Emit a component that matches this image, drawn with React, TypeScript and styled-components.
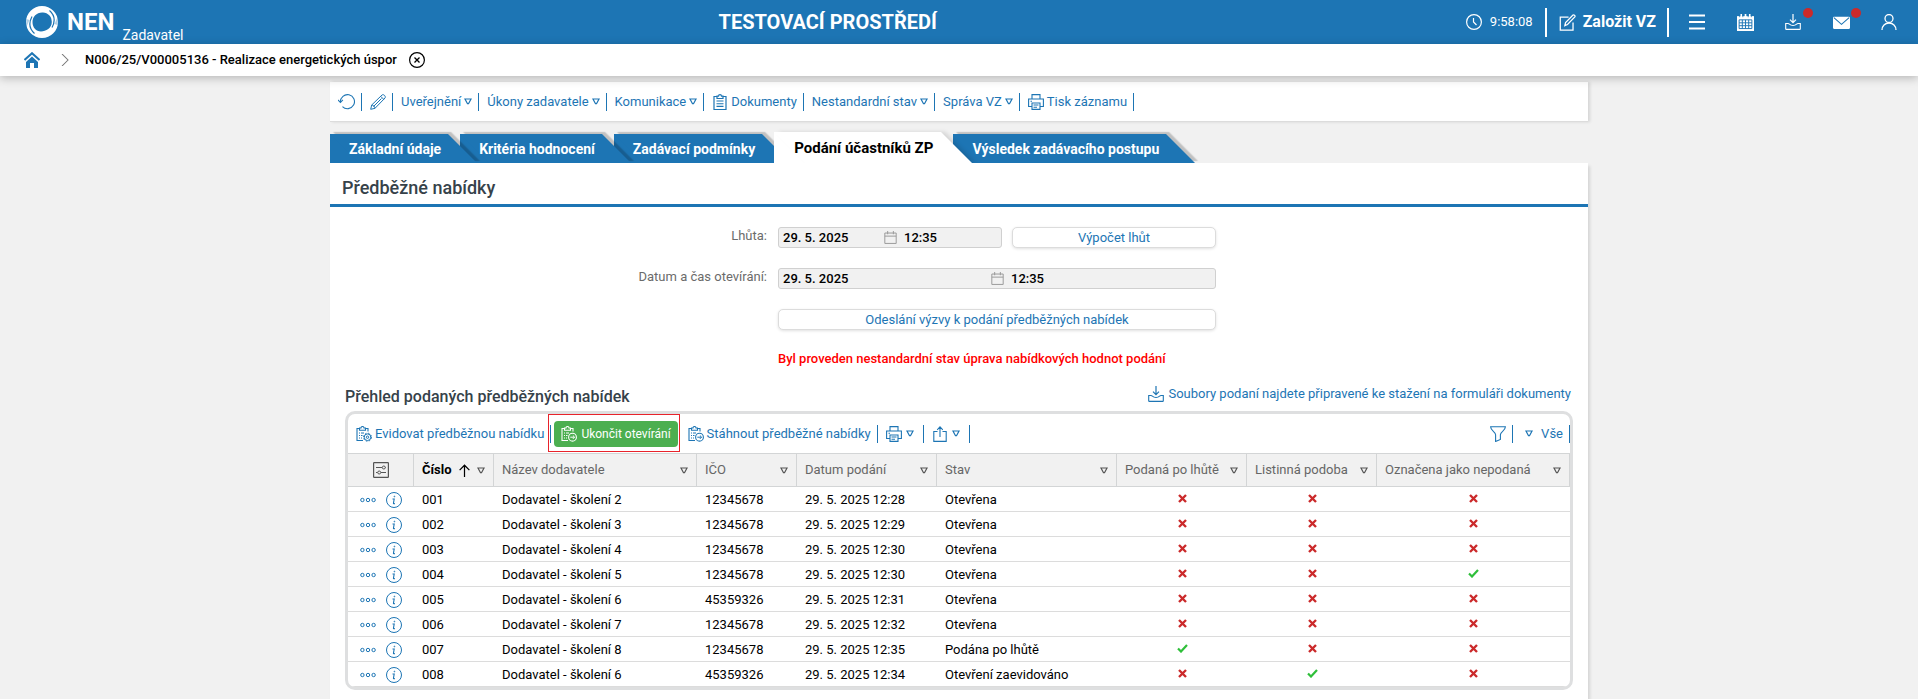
import React from 'react';
import styled, { createGlobalStyle, css } from 'styled-components';

const blue = '#1d75b4';
const line = '#dcdcdc';

const GlobalStyle = createGlobalStyle`
  *, *::before, *::after { box-sizing: border-box; }
  html, body { margin: 0; background: #f1f1f1; }
  body, button, input { font-family: Roboto, "Liberation Sans", sans-serif; font-size: 13px; line-height: 16px; color: #000; }
  button { border: 0; margin: 0; padding: 0; background: none; cursor: pointer; }
  a { color: ${blue}; text-decoration: none; }
  svg { display: block; flex: none; }
`;

/* ---------- icons ---------- */

type IconProps = { size?: number; children?: React.ReactNode };

const Icon = ({ size = 16, children }: IconProps) => (
  <svg width={size} height={size} viewBox="0 0 16 16" fill="none" stroke="currentColor" aria-hidden="true">
    {children}
  </svg>
);

const Clock = () => (
  <Icon><circle cx="8" cy="8" r="7.4" strokeWidth="1.2" /><path d="M7.5 4v4l3 3" strokeWidth="1.2" /></Icon>
);
const Edit = () => (
  <Icon size={17}>
    <path d="M9 3H1.200V15.200H13.200V8" strokeWidth="1.200" />
    <path d="M5.500 11l.7-2.900L13.200 1c.7-.7 2.400.8 1.700 1.700L8 9.900z" strokeWidth="1.200" />
  </Icon>
);
const Menu = () => <Icon><path d="M0 1.500h16M0 8h16M0 14.500h16" strokeWidth="1.800" /></Icon>;
const CalendarSolid = () => (
  <Icon size={17}>
    <path d="M0 2h16v14H0z" fill="currentColor" stroke="none" />
    <path d="M4 0v3.500M8 0v3.500M12 0v3.500" strokeWidth="1.600" />
    <path d="M2 5.500h12M2 8.300h12M2 11h12M2 13.700h12M2 5.500v8.200M5 5.500v8.200M8 5.500v8.200M11 5.500v8.200M14 5.500v8.200" stroke={blue} strokeWidth=".9" />
    <path d="M2.500 0v3M5.500 0v3M10.500 0v3M13.500 0v3" stroke={blue} strokeWidth=".7" />
  </Icon>
);
const Download = () => (
  <Icon>
    <path d="M8 0v8.500M5 5.700l3 3 3-3" strokeWidth="1.200" />
    <path d="M3 9.500H.700V14.700q0 .7.7.7h13.200q.7 0 .7-.7V9.500H13C11.500 9.500 11.500 11.500 8 11.500S4.500 9.500 3 9.500z" strokeWidth="1.100" />
  </Icon>
);
const Mail = () => (
  <Icon size={17}>
    <rect x="0" y="2.500" width="16" height="11.500" rx="1" fill="currentColor" stroke="none" />
    <path d="M.8 3.500L8 9.700l7.200-6.200" stroke={blue} strokeWidth="1" />
  </Icon>
);
const User = () => (
  <Icon><circle cx="8" cy="4.500" r="4" strokeWidth="1.300" /><path d="M1 16c0-4 3-7 7-7s7 3 7 7" strokeWidth="1.300" /></Icon>
);
const Home = () => (
  <Icon>
    <path d="M.5 8L8 1.200 15.500 8" strokeWidth="2" />
    <path d="M8 4.600L2 10v6h4v-5h4v5h4v-6z" fill="currentColor" stroke="none" />
  </Icon>
);
const Chevron = () => <Icon size={12}><path d="M4 0l8 8-8 8" stroke="#777" strokeWidth="1.400" /></Icon>;
const CloseCircle = () => (
  <Icon><circle cx="8" cy="8" r="7.400" strokeWidth="1.200" /><path d="M5.500 5.500l5 5M10.500 5.500l-5 5" strokeWidth="1.300" /></Icon>
);
const Refresh = () => (
  <Icon size={17}><path d="M2.300 8.500A6.600 6.600 0 1 1 4.200 12.800" /><path d="M0 6.500l2.300 2.500 2.300-2.500" /></Icon>
);
const Pencil = () => (
  <Icon>
    <path d="M.7 15.300l1-4.300L12 1c1.500-1.300 4.300 1.500 3 3L5 14.300z" />
    <path d="M1.700 11c1.500 0 3.300 1.800 3.300 3.300M10.700 2.300l3 3M3.500 12.500l8-8" />
  </Icon>
);
const Triangle = () => (
  <svg width="8" height="7" viewBox="0 0 8 7" fill="none" stroke="currentColor" aria-hidden="true">
    <path d="M1 1h6L4.500 5.700h-1z" strokeWidth="1.200" />
  </svg>
);
const Clipboard = () => (
  <Icon>
    <path d="M5 2.500H2v13h12v-13h-3M5 4.500v-2.300h1.500a1.500 1.500 0 0 1 3 0H11v2.300z" strokeWidth="1.200" />
    <path d="M4.500 7h7M4.500 9.700h7M4.500 12.400h7" strokeWidth="1.100" />
  </Icon>
);
const Printer = () => (
  <Icon>
    <path d="M4 5V.6h8V5M4 12.500H.6V5h14.800v7.500H12" strokeWidth="1.100" />
    <path d="M4 9h8v6.400H4zM5.500 11h5M5.500 13.200h3.500M2.500 7.200h1.500" strokeWidth="1.100" />
  </Icon>
);
const ClipboardGear = () => (
  <Icon>
    <path d="M3.500 2.500H1v12h6M9.500 2.500H12v3M3.500 4.200V2H5a1.500 1.500 0 0 1 3 0h1.500v2.200z" strokeWidth="1.100" />
    <path d="M3 7h1M5 7h3M3 9.500h1M5 9.500h1.500M3 12h1M5 12h1" />
    <circle cx="11.500" cy="11.200" r="3.300" />
    <circle cx="11.500" cy="11.200" r="1.200" />
    <circle cx="11.500" cy="11.200" r="4" strokeDasharray="1.600 1.540" />
  </Icon>
);
const ClipboardArrow = () => (
  <Icon>
    <path d="M3.500 2.500H1v12h6M9.500 2.500H12v3M3.500 4.200V2H5a1.500 1.500 0 0 1 3 0h1.500v2.200z" strokeWidth="1.100" />
    <path d="M3 7h1M5 7h3M3 9.500h1M5 9.500h1.500M3 12h1M5 12h1" />
    <circle cx="11.500" cy="11.200" r="3.900" strokeWidth="1.100" />
    <path d="M9.300 11.200h4M11.900 9.500l1.700 1.700-1.700 1.700" />
  </Icon>
);
const Share = () => (
  <Icon><path d="M5.500 5.500H1.800v9.900h12.400V5.500H10.500M8 11V1M5.200 3.800L8 .9l2.800 2.900" strokeWidth="1.100" /></Icon>
);
const Funnel = () => (
  <Icon><path d="M.6.700h14.800c0 4-5 5-5 8v4.800l-4.800 2V8.700c0-3-5-4-5-8z" strokeWidth="1.100" /></Icon>
);
const CalendarOutline = () => (
  <Icon size={13}><path d="M1 2.500h14v12.800H1zM1 6.300h14M4.500 0v4M11.500 0v4" strokeWidth="1.200" /></Icon>
);
const Sliders = () => (
  <Icon>
    <rect x=".6" y=".6" width="14.800" height="14.800" rx=".6" strokeWidth="1.200" />
    <path d="M3 5.500h6M12.500 5.500H13M3 10.500h1.500M8 10.500h5" strokeWidth="1.100" />
    <circle cx="10.800" cy="5.500" r="1.500" /><circle cx="6.200" cy="10.500" r="1.500" />
  </Icon>
);
const ArrowUp = () => (
  <Icon size={13}><path d="M8 16V1.500M2 7.500l6-6 6 6" strokeWidth="1.500" /></Icon>
);
const Dots = () => (
  <Icon><circle cx="2.400" cy="8" r="1.700" /><circle cx="8" cy="8" r="1.700" /><circle cx="13.600" cy="8" r="1.700" /></Icon>
);
const Info = () => (
  <Icon>
    <circle cx="8" cy="8" r="7.500" />
    <path d="M6.500 7h1.700L7.400 11.300q0 .7 1.600.3" strokeWidth="1.100" />
    <circle cx="8.400" cy="4.500" r=".4" />
  </Icon>
);
const Cross = () => (
  <svg width="9" height="9" viewBox="0 0 9 9" role="img" aria-label="Ne">
    <path d="M1 1l7 7M8 1L1 8" stroke="#cb2a2b" strokeWidth="2.400" />
  </svg>
);
const Tick = () => (
  <svg width="11" height="9" viewBox="0 0 11 9" role="img" aria-label="Ano">
    <path d="M1 4.500l3 3L10 1" fill="none" stroke="#2fbf3a" strokeWidth="2.200" />
  </svg>
);
const Logo = () => (
  <svg width="32" height="32" viewBox="0 0 32 32" fill="none" aria-hidden="true">
    <path
      d="M16 0a16 16 0 0 1 0 32a16 16 0 0 1 0-32zM17 6.500C11 6 6.500 10.500 6.500 16S10 25.500 15 25.500 25.800 22 25.800 16 22 7 17 6.500z"
      fill="#fff"
      fillRule="evenodd"
    />
    <path d="M23.500 4.500C28.500 9 29.500 15 26 21.500" stroke={blue} strokeWidth="1.200" />
    <path d="M8.500 27.500C3.500 23 2.500 17 6 10.500" stroke={blue} strokeWidth="1.200" />
    <path d="M32 10l-.5 9-3-1zM0 22l.5-9 3 1z" fill={blue} opacity=".35" />
  </svg>
);

/* ---------- page header ---------- */

const Page = styled.div`
  min-height: 100vh;
  display: flex;
  flex-direction: column;
`;

const TopBar = styled.header`
  display: flex;
  align-items: center;
  height: 44px;
  padding: 0 5px 0 26px;
  background: ${blue};
  color: #fff;
`;

const TopSide = styled.div<{ $end?: boolean }>`
  flex: ${p => (p.$end ? '585 1 0' : '415 1 0')};
  display: flex;
  align-items: center;
  justify-content: ${p => (p.$end ? 'flex-end' : 'flex-start')};
  height: 44px;
`;

const Brand = styled.span`
  margin: 0 8px 0 9px;
  font-size: 24px;
  line-height: 28px;
  font-weight: 700;
`;

const Role = styled.span`
  align-self: flex-end;
  padding-bottom: 1px;
  font-size: 14px;
`;

const Environment = styled.strong`
  font-size: 20px;
  line-height: 24px;
  font-weight: 700;
`;

const ClockText = styled.time`
  display: flex;
  align-items: center;
  gap: 8px;
  padding-right: 12px;
`;

const CreateButton = styled.button`
  display: flex;
  align-items: center;
  gap: 7px;
  height: 29px;
  margin-right: 4px;
  padding: 0 11px 0 12px;
  border: solid #fff;
  border-width: 0 2px;
  color: #fff;
  font-size: 16px;
  font-weight: 700;
`;

const TopIcon = styled.button<{ $badge?: boolean }>`
  position: relative;
  display: grid;
  place-items: center;
  width: 48px;
  height: 44px;
  color: #fff;
  ${p => p.$badge && css`
    &::after {
      content: '';
      position: absolute;
      top: 8px;
      right: 4px;
      width: 10px;
      height: 10px;
      border-radius: 50%;
      background: #cb2a2b;
    }
  `}
`;

const Breadcrumbs = styled.nav`
  position: relative;
  display: flex;
  align-items: center;
  height: 32px;
  padding: 0 24px;
  background: #fff;
  box-shadow: 0 2px 10px rgba(0, 0, 0, 0.25);
`;

const Crumb = styled.span`
  margin: 0 12px 0 14px;
  font-weight: 500;
`;

const HomeLink = styled.a`
  margin-right: 19px;
`;

/* ---------- record toolbar ---------- */

const Content = styled.main`
  flex: 1;
  display: flex;
  flex-direction: column;
  width: calc(100% - 40px);
  max-width: 1258px;
  margin: 6px auto 0;
`;

const RecordBar = styled.div`
  display: flex;
  align-items: center;
  height: 40px;
  background: #fff;
  border-bottom: 1px solid ${line};
  box-shadow: 2px 0 3px rgba(0, 0, 0, 0.12);
`;

const toolSpacing = {
  normal: { gap: 3, left: 8, right: 6 },
  menu: { gap: 4, left: 8, right: 9 },
  view: { gap: 8, left: 12, right: 6 },
};

const ToolButton = styled.button<{ $kind?: keyof typeof toolSpacing }>`
  display: flex;
  align-items: center;
  gap: ${p => toolSpacing[p.$kind ?? 'normal'].gap}px;
  height: 18px;
  padding: 0 ${p => toolSpacing[p.$kind ?? 'normal'].right}px 0 ${p => toolSpacing[p.$kind ?? 'normal'].left}px;
  border-right: 1px solid ${blue};
  color: ${blue};
  white-space: nowrap;
`;

/* ---------- tabs ---------- */

const Tabs = styled.div`
  position: relative;
  display: flex;
  align-items: flex-end;
  gap: 12px;
  height: 31px;
  margin-top: 10px;
`;

const Tab = styled.button<{ $active?: boolean; $layer: number }>`
  position: relative;
  z-index: ${p => p.$layer};
  isolation: isolate;
  height: ${p => (p.$active ? 31 : 29)}px;
  padding: 0 ${p => (p.$active ? 8 : 7)}px 0 ${p => (p.$active ? 20 : 19)}px;
  background: ${p => (p.$active ? '#fff' : blue)};
  color: ${p => (p.$active ? '#000' : '#fff')};
  font-size: ${p => (p.$active ? 15 : 14)}px;
  font-weight: 700;
  white-space: nowrap;

  &::before {
    content: '';
    position: absolute;
    z-index: -1;
    inset: 0;
    background: inherit;
    transform: skewX(45deg);
    transform-origin: top;
    box-shadow: ${p => (p.$active ? '4px 0 4px rgba(0, 0, 0, 0.12)' : '5px -2px 1px rgba(0, 0, 0, 0.2)')};
  }
`;

/* ---------- panel ---------- */

const Panel = styled.section`
  position: relative;
  z-index: 10;
  flex: 1;
  padding-bottom: 20px;
  background: #fff;
  box-shadow: 2px 3px 3px rgba(0, 0, 0, 0.12);
`;

const PanelTitle = styled.h1`
  margin: 0;
  padding: 14px 12px 5px;
  border-bottom: 3px solid ${blue};
  color: #36424a;
  font-size: 18px;
  line-height: 22px;
  font-weight: 500;
`;

const Form = styled.form`
  display: grid;
  grid-template-columns: 437fr 438fr 361fr;
  column-gap: 11px;
  row-gap: 20px;
  padding-top: 20px;
`;

const Label = styled.label`
  padding-top: 1px;
  color: #6b6b6b;
  text-align: right;
`;

const Field = styled.div`
  grid-column: 2;
  display: flex;
  gap: 10px;
`;

const DateBox = styled.div`
  flex: 218 1 0;
  min-width: 0;
  display: flex;
  align-items: center;
  height: 21px;
  padding-left: 4px;
  border: 1px solid #d0d0d0;
  border-radius: 3px;
  background: #f1f1f1;
  color: #999;
`;

const DateInput = styled.input<{ $time?: boolean }>`
  min-width: 0;
  width: ${p => (p.$time ? 'auto' : 'calc(50% - 8px)')};
  flex: ${p => (p.$time ? '1 1 0' : 'none')};
  margin: 0;
  padding: 0 0 0 ${p => (p.$time ? 7 : 0)}px;
  border: 0;
  outline: 0;
  background: transparent;
  font-weight: 500;
`;

const FormButton = styled.button`
  flex: 202 1 0;
  height: 21px;
  border: 1px solid ${line};
  border-radius: 5px;
  background: #fff;
  box-shadow: 0 1px 3px rgba(0, 0, 0, 0.12);
  color: ${blue};
`;

const Notice = styled.p`
  grid-column: 2;
  margin: 0;
  padding-top: 1px;
  color: #f00;
  font-weight: 500;
  white-space: nowrap;
`;

/* ---------- list of offers ---------- */

const ListHeader = styled.div`
  display: flex;
  align-items: flex-start;
  justify-content: space-between;
  padding: 19px 17px 0 15px;
`;

const ListTitle = styled.h2`
  margin: 0;
  color: #36424a;
  font-size: 16px;
  line-height: 22px;
  font-weight: 500;
`;

const DocsLink = styled.a`
  display: flex;
  align-items: center;
  gap: 4px;
`;

const ListBox = styled.div`
  margin: 3px 15px 0;
  border: 3px solid #dedfe0;
  border-radius: 10px;
  overflow: hidden;
`;

const ListBar = styled.div`
  display: flex;
  align-items: center;
  height: 39px;
`;

const Spacer = styled.span`
  flex: 1;
`;

const Highlight = styled.span`
  position: relative;
  margin: 0 2px 0 3px;

  &::after {
    content: '';
    position: absolute;
    inset: -7px -2px -5px -6px;
    border: 1px solid #e8232b;
    pointer-events: none;
  }
`;

const GreenButton = styled.button`
  display: flex;
  align-items: center;
  gap: 4px;
  height: 26px;
  padding: 0 7px;
  border-radius: 4px;
  background: #4caf50;
  color: #fff;
  font-size: 12px;
  white-space: nowrap;
`;

const Table = styled.table`
  width: 100%;
  table-layout: fixed;
  border-collapse: separate;
  border-spacing: 0;
`;

const Th = styled.th<{ $sorted?: boolean }>`
  height: 34px;
  padding: 0 8px;
  border: solid #d3d5d6;
  border-width: 1px 1px 1px 0;
  background: #f1f1f1;
  color: ${p => (p.$sorted ? '#000' : '#666')};
  font-weight: ${p => (p.$sorted ? 700 : 400)};
  text-align: left;
  white-space: nowrap;
`;

const ThInner = styled.div<{ $center?: boolean }>`
  display: flex;
  align-items: center;
  justify-content: ${p => (p.$center ? 'center' : 'space-between')};
  color: inherit;
`;

const FilterButton = styled.button`
  color: #555;
`;

const Td = styled.td`
  height: 25px;
  padding: 1px 8px 0;
  border-bottom: 1px solid ${line};
  white-space: nowrap;

  > svg { margin: 0 auto 3px; }
`;

const RowActions = styled.div`
  display: flex;
  gap: 10px;
  padding-left: 4px;

  button { color: ${blue}; }
`;

const columns: { title: string; width?: number; sorted?: boolean }[] = [
  { title: 'Číslo', width: 80, sorted: true },
  { title: 'Název dodavatele' },
  { title: 'IČO', width: 100 },
  { title: 'Datum podání', width: 140 },
  { title: 'Stav', width: 180 },
  { title: 'Podaná po lhůtě', width: 130 },
  { title: 'Listinná podoba', width: 130 },
  { title: 'Označena jako nepodaná', width: 193 },
];

type Offer = [string, string, string, string, string, boolean, boolean, boolean];

const offers: Offer[] = [
  ['001', 'Dodavatel - školení 2', '12345678', '29. 5. 2025 12:28', 'Otevřena', false, false, false],
  ['002', 'Dodavatel - školení 3', '12345678', '29. 5. 2025 12:29', 'Otevřena', false, false, false],
  ['003', 'Dodavatel - školení 4', '12345678', '29. 5. 2025 12:30', 'Otevřena', false, false, false],
  ['004', 'Dodavatel - školení 5', '12345678', '29. 5. 2025 12:30', 'Otevřena', false, false, true],
  ['005', 'Dodavatel - školení 6', '45359326', '29. 5. 2025 12:31', 'Otevřena', false, false, false],
  ['006', 'Dodavatel - školení 7', '12345678', '29. 5. 2025 12:32', 'Otevřena', false, false, false],
  ['007', 'Dodavatel - školení 8', '12345678', '29. 5. 2025 12:35', 'Podána po lhůtě', true, false, false],
  ['008', 'Dodavatel - školení 6', '45359326', '29. 5. 2025 12:34', 'Otevření zaevidováno', false, true, false],
];

const tabs = ['Základní údaje', 'Kritéria hodnocení', 'Zadávací podmínky', 'Podání účastníků ZP', 'Výsledek zadávacího postupu'];
const activeTab = 3;

export default function App() {
  return (
    <Page>
      <GlobalStyle />
      <TopBar>
        <TopSide>
          <Logo />
          <Brand>NEN</Brand>
          <Role>Zadavatel</Role>
        </TopSide>
        <Environment>TESTOVACÍ PROSTŘEDÍ</Environment>
        <TopSide $end>
          <ClockText><Clock />9:58:08</ClockText>
          <CreateButton type="button"><Edit />Založit VZ</CreateButton>
          <TopIcon type="button" aria-label="Menu"><Menu /></TopIcon>
          <TopIcon type="button" aria-label="Kalendář"><CalendarSolid /></TopIcon>
          <TopIcon type="button" aria-label="Stažené soubory" $badge><Download /></TopIcon>
          <TopIcon type="button" aria-label="Zprávy" $badge><Mail /></TopIcon>
          <TopIcon type="button" aria-label="Uživatel"><User /></TopIcon>
        </TopSide>
      </TopBar>
      <Breadcrumbs>
        <HomeLink href="#" aria-label="Domů"><Home /></HomeLink>
        <Chevron />
        <Crumb>N006/25/V00005136 - Realizace energetických úspor</Crumb>
        <button type="button" aria-label="Zavřít"><CloseCircle /></button>
      </Breadcrumbs>

      <Content>
        <RecordBar>
          <ToolButton type="button" aria-label="Obnovit"><Refresh /></ToolButton>
          <ToolButton type="button" aria-label="Upravit"><Pencil /></ToolButton>
          <ToolButton type="button">Uveřejnění<Triangle /></ToolButton>
          <ToolButton type="button">Úkony zadavatele<Triangle /></ToolButton>
          <ToolButton type="button">Komunikace<Triangle /></ToolButton>
          <ToolButton type="button"><Clipboard />Dokumenty</ToolButton>
          <ToolButton type="button">Nestandardní stav<Triangle /></ToolButton>
          <ToolButton type="button">Správa VZ<Triangle /></ToolButton>
          <ToolButton type="button"><Printer />Tisk záznamu</ToolButton>
        </RecordBar>

        <Tabs role="tablist">
          {tabs.map((title, i) => (
            <Tab
              key={title}
              type="button"
              role="tab"
              aria-selected={i === activeTab}
              $active={i === activeTab}
              $layer={i === activeTab ? tabs.length + 1 : tabs.length - i}
            >
              {title}
            </Tab>
          ))}
        </Tabs>

        <Panel>
          <PanelTitle>Předběžné nabídky</PanelTitle>
          <Form>
            <Label htmlFor="deadline">Lhůta:</Label>
            <Field>
              <DateBox>
                <DateInput id="deadline" defaultValue="29. 5. 2025" readOnly />
                <CalendarOutline />
                <DateInput $time aria-label="Čas lhůty" defaultValue="12:35" readOnly />
              </DateBox>
              <FormButton type="button">Výpočet lhůt</FormButton>
            </Field>
            <span />
            <Label htmlFor="opening">Datum a čas otevírání:</Label>
            <Field>
              <DateBox>
                <DateInput id="opening" defaultValue="29. 5. 2025" readOnly />
                <CalendarOutline />
                <DateInput $time aria-label="Čas otevírání" defaultValue="12:35" readOnly />
              </DateBox>
            </Field>
            <Field>
              <FormButton type="button">Odeslání výzvy k podání předběžných nabídek</FormButton>
            </Field>
            <Notice>Byl proveden nestandardní stav úprava nabídkových hodnot podání</Notice>
          </Form>

          <ListHeader>
            <ListTitle>Přehled podaných předběžných nabídek</ListTitle>
            <DocsLink href="#"><Download />Soubory podaní najdete připravené ke stažení na formuláři dokumenty</DocsLink>
          </ListHeader>

          <ListBox>
            <ListBar>
              <ToolButton type="button"><ClipboardGear />Evidovat předběžnou nabídku</ToolButton>
              <Highlight>
                <GreenButton type="button"><ClipboardArrow />Ukončit otevírání</GreenButton>
              </Highlight>
              <ToolButton type="button"><ClipboardArrow />Stáhnout předběžné nabídky</ToolButton>
              <ToolButton type="button" $kind="menu" aria-label="Tisk"><Printer /><Triangle /></ToolButton>
              <ToolButton type="button" $kind="menu" aria-label="Export"><Share /><Triangle /></ToolButton>
              <Spacer />
              <ToolButton type="button" aria-label="Filtr"><Funnel /></ToolButton>
              <ToolButton type="button" $kind="view"><Triangle />Vše</ToolButton>
            </ListBar>
            <Table>
              <colgroup>
                <col width={66} />
                {columns.map(c => <col key={c.title} width={c.width} />)}
              </colgroup>
              <thead>
                <tr>
                  <Th>
                    <ThInner $center>
                      <FilterButton type="button" aria-label="Nastavení sloupců"><Sliders /></FilterButton>
                    </ThInner>
                  </Th>
                  {columns.map(c => (
                    <Th key={c.title} $sorted={c.sorted}>
                      <ThInner>
                        {c.title}
                        {c.sorted && <ArrowUp />}
                        <FilterButton type="button" aria-label={`Filtr ${c.title}`}><Triangle /></FilterButton>
                      </ThInner>
                    </Th>
                  ))}
                </tr>
              </thead>
              <tbody>
                {offers.map(offer => (
                  <tr key={offer[0]}>
                    <Td>
                      <RowActions>
                        <button type="button" aria-label="Akce"><Dots /></button>
                        <button type="button" aria-label="Detail"><Info /></button>
                      </RowActions>
                    </Td>
                    {offer.map((value, i) => (
                      <Td key={i}>{typeof value === 'boolean' ? (value ? <Tick /> : <Cross />) : value}</Td>
                    ))}
                  </tr>
                ))}
              </tbody>
            </Table>
          </ListBox>
        </Panel>
      </Content>
    </Page>
  );
}
